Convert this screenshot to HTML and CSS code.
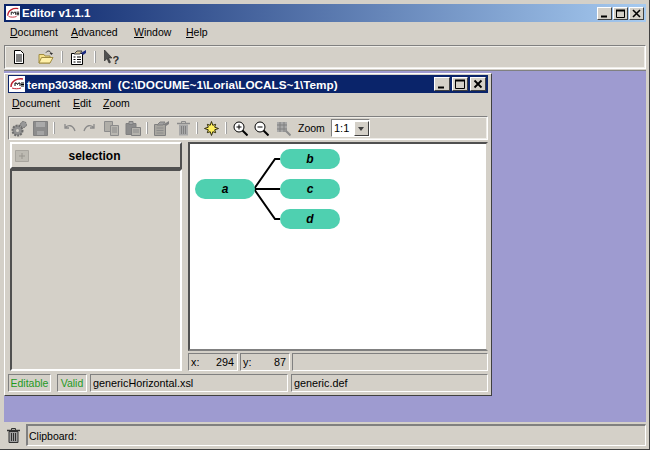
FILE: index.html
```html
<!DOCTYPE html>
<html lang="en">

<head>
    <meta charset="UTF-8">
    <title>Editor v1.1.1</title>
    <link rel="stylesheet" href="styles.css">
</head>

<body>
    <div class="app">
        <header class="titlebar main-title">
            <svg class="logo" width="14" height="14" viewBox="0 0 16 16">
                <rect width="16" height="16" fill="#fff" />
                <path d="M2 11C2 5 8 2 14 3" fill="none" stroke="#c02030" stroke-width="1.5" />
                <path d="M3 12C6 13 9 13 12 12" fill="none" stroke="#c02030" />
                <path d="M6 10V7h1.500l1 1.500 1-1.500H11v3M12 7h3M12 8.500h3M12 10h3" fill="none" stroke="#000" />
            </svg>
            <span class="title-text">Editor v1.1.1</span>
            <div class="win-buttons">
                <button class="win-btn" type="button"><svg width="9" height="9" viewBox="0 0 9 9"><path d="M1 7.500h6" stroke="#000" stroke-width="2" /></svg></button>
                <button class="win-btn" type="button"><svg width="11" height="9" viewBox="0 0 11 9"><path d="M1.500 1.500h8v7h-8z" fill="none" stroke="#000" /><path d="M1 1.500h9" stroke="#000" stroke-width="2" /></svg></button>
                <button class="win-btn" type="button"><svg width="9" height="9" viewBox="0 0 9 9"><path d="M1 1l7 7M8 1l-7 7" stroke="#000" stroke-width="1.600" /></svg></button>
            </div>
        </header>

        <nav class="menu main-menu">
            <span><u>D</u>ocument</span>
            <span><u>A</u>dvanced</span>
            <span><u>W</u>indow</span>
            <span><u>H</u>elp</span>
        </nav>

        <div class="toolbar main-tools">
            <span class="tool">
                <svg width="16" height="16" viewBox="0 0 16 16"><path d="M3.500 1.500h6l3 3v10h-9z" fill="#fff" stroke="#000" /><path d="M5 6h6M5 8h6M5 10h6M5 12h6" stroke="#000" /></svg>
            </span>
            <span class="tool">
                <svg width="16" height="16" viewBox="0 0 16 16"><path d="M1 5.500h5l1 1.500h5v7H1z" fill="#f5e08a" stroke="#a08c40" /><path d="M1 14l2.500-5.500H15L12 14z" fill="#fff0a8" stroke="#a08c40" /><path d="M8 3.500C9.500 1.500 12 1.500 13 4" fill="none" stroke="#303030" /><path d="M11.500 4H15l-1.500 2z" fill="#303030" /></svg>
            </span>
            <span class="tool-sep"></span>
            <span class="tool">
                <svg width="18" height="16" viewBox="0 0 18 16"><path d="M1.500 4.500h11v11h-11z" fill="#fff" stroke="#000" /><path d="M3.500 8h2M7 8h4M3.500 10.500h2M7 10.500h4M3.500 13h2M7 13h4" stroke="#000" /><path d="M4 5l3-3h5l-2 3z" fill="#d8c8a0" stroke="#404040" /><path d="M11 4l5-3v3l-3 2z" fill="#1a2a80" /></svg>
            </span>
            <span class="tool-sep"></span>
            <span class="tool">
                <svg width="17" height="16" viewBox="0 0 17 16"><path d="M1.500 1v11l2.500-2.500 2 4.500 1.500-.7-2-4.300H9z" fill="#505050" stroke="#202020" stroke-width=".6" /><text class="help-mark" x="9.500" y="15">?</text></svg>
            </span>
        </div>

        <div class="desktop">
            <section class="window">
                <header class="titlebar doc-title">
                    <svg class="logo" width="16" height="16" viewBox="0 0 16 16">
                        <rect width="16" height="16" fill="#fff" />
                        <path d="M2 11C2 5 8 2 14 3" fill="none" stroke="#c02030" stroke-width="1.5" />
                        <path d="M3 12C6 13 9 13 12 12" fill="none" stroke="#c02030" />
                        <path d="M6 10V7h1.500l1 1.500 1-1.500H11v3M12 7h3M12 8.500h3M12 10h3" fill="none" stroke="#000" />
                    </svg>
                    <span class="title-text">temp30388.xml&nbsp; (C:\DOCUME~1\Loria\LOCALS~1\Temp)</span>
                    <div class="win-buttons">
                        <button class="win-btn" type="button"><svg width="10" height="10" viewBox="0 0 10 10"><path d="M1 8.500h6" stroke="#000" stroke-width="2" /></svg></button>
                        <button class="win-btn" type="button"><svg width="12" height="10" viewBox="0 0 12 10"><path d="M1.500 1.500h9v8h-9z" fill="none" stroke="#000" /><path d="M1 1.500h10" stroke="#000" stroke-width="2" /></svg></button>
                        <button class="win-btn" type="button"><svg width="10" height="10" viewBox="0 0 10 10"><path d="M1.500 1.500l7 7M8.500 1.500l-7 7" stroke="#000" stroke-width="1.800" /></svg></button>
                    </div>
                </header>

                <nav class="menu doc-menu">
                    <span><u>D</u>ocument</span>
                    <span><u>E</u>dit</span>
                    <span><u>Z</u>oom</span>
                </nav>

                <div class="toolbar doc-tools">
                    <span class="tool small">
                        <svg width="17" height="17" viewBox="0 0 17 17"><circle cx="6.500" cy="10.500" r="5" fill="#909090" stroke="#6c6c6c" stroke-width="2" stroke-dasharray="2 1" /><circle cx="6.500" cy="10.500" r="1.500" fill="#d4d0c8" /><circle cx="12.500" cy="4.500" r="3" fill="#989898" stroke="#6c6c6c" stroke-dasharray="2 1" /></svg>
                    </span>
                    <span class="tool small">
                        <svg width="15" height="15" viewBox="0 0 15 15"><path d="M.500.500h14v14H.500z" fill="#8c8c8c" stroke="#808080" /><path d="M3 1h9v5H3z" fill="#aaa" /><path d="M4 10h7v4H4z" fill="#a4a4a4" /></svg>
                    </span>
                    <span class="tool-sep small"></span>
                    <span class="tool small">
                        <svg width="14" height="10" viewBox="0 0 14 10"><path d="M3 1v4h4M3 5c3-4 8-3 10 3" fill="none" stroke="#8a8a8a" stroke-width="1.300" /></svg>
                    </span>
                    <span class="tool small">
                        <svg width="14" height="10" viewBox="0 0 14 10"><path d="M11 1v4H7M11 5C8 1 3 2 1 8" fill="none" stroke="#8a8a8a" stroke-width="1.300" /></svg>
                    </span>
                    <span class="tool small">
                        <svg width="15" height="15" viewBox="0 0 15 15"><path d="M.500.500h8v10h-8z" fill="#b0aea8" stroke="#8c8c8c" /><path d="M6.500 4.500h8v10h-8z" fill="#b8b6b0" stroke="#8c8c8c" /><path d="M8 7h5M8 9h5M8 11h5" stroke="#8c8c8c" /></svg>
                    </span>
                    <span class="tool small">
                        <svg width="16" height="15" viewBox="0 0 16 15"><path d="M1 2.500h10v11H1z" fill="#8c8c8c" stroke="#808080" /><path d="M4 .500h4v3H4z" fill="#a4a4a4" stroke="#808080" /><path d="M6.500 6.500h9v8h-9z" fill="#b4b2ac" stroke="#808080" /><path d="M8 9h6M8 11h6" stroke="#8c8c8c" /></svg>
                    </span>
                    <span class="tool-sep small"></span>
                    <span class="tool small">
                        <svg width="17" height="16" viewBox="0 0 17 16"><path d="M1.500 4.500h11v11h-11z" fill="#a8a6a0" stroke="#808080" /><path d="M3.500 8h7M3.500 10.500h7M3.500 13h7" stroke="#8c8c8c" /><path d="M4 5l3-3h5l-2 3z" fill="#a0a0a0" stroke="#808080" /><path d="M11 4l5-3v3l-3 2z" fill="#808080" /></svg>
                    </span>
                    <span class="tool small">
                        <svg width="13" height="15" viewBox="0 0 13 15"><path d="M0 2.500h13" stroke="#8c8c8c" stroke-width="1.500" /><path d="M4.500 2V.500h4V2" fill="none" stroke="#8c8c8c" /><path d="M2 3.500h9v11H2z" fill="#a8a8a8" /><path d="M4.500 5v8M6.500 5v8M8.500 5v8" stroke="#808080" /></svg>
                    </span>
                    <span class="tool-sep small"></span>
                    <span class="tool small">
                        <svg width="15" height="15" viewBox="0 0 15 15"><path d="M7.500.500L8.800 4.300 11.700 3.300 10.700 6.200 14.500 7.500 10.700 8.800 11.700 11.700 8.800 10.700 7.500 14.500 6.200 10.700 3.300 11.700 4.300 8.800 .500 7.500 4.300 6.200 3.300 3.300 6.200 4.300z" fill="#fff060" stroke="#302c10" /></svg>
                    </span>
                    <span class="tool-sep small"></span>
                    <span class="tool small">
                        <svg width="15" height="15" viewBox="0 0 15 15"><circle cx="6" cy="6" r="5" fill="#fff" stroke="#000" /><path d="M9.500 9.500l5 5" stroke="#000" stroke-width="2" /><path d="M3.500 6h5M6 3.500v5" stroke="#000" /></svg>
                    </span>
                    <span class="tool small">
                        <svg width="15" height="15" viewBox="0 0 15 15"><circle cx="6" cy="6" r="5" fill="#fff" stroke="#000" /><path d="M9.500 9.500l5 5" stroke="#000" stroke-width="2" /><path d="M3.500 6h5" stroke="#000" /></svg>
                    </span>
                    <span class="tool small">
                        <svg width="15" height="15" viewBox="0 0 15 15"><path d="M1 1h10v10H1z" fill="#a8a8a8" /><path d="M9.500 9.500l5 5" stroke="#8c8c8c" stroke-width="2" /><path d="M1 4h10M1 8h10M4 1v10M8 1v10" stroke="#808080" /></svg>
                    </span>
                    <span class="zoom-label">Zoom</span>
                    <div class="zoom-select">
                        <span class="zoom-value">1:1</span>
                        <span class="zoom-arrow"></span>
                    </div>
                </div>

                <div class="workspace">
                    <aside class="side">
                        <div class="side-head">
                            <svg width="14" height="12" viewBox="0 0 14 12"><path d="M.500.500h13v11H.500z" fill="#bdbab2" stroke="#a8a59e" /><path d="M4 6h6M7 3v6" stroke="#98958e" /></svg>
                            <span class="side-title">selection</span>
                        </div>
                        <div class="side-list"></div>
                    </aside>

                    <div class="canvas-col">
                        <div class="canvas">
                            <svg class="tree" width="296" height="205" viewBox="0 0 296 205">
                                <path d="M64 45L85 15H90M64 45H90M64 45L85 75H90" fill="none" stroke="#000" stroke-width="2" />
                                <rect class="node" x="5" y="35" width="60" height="20" rx="10" />
                                <rect class="node" x="90" y="5" width="60" height="20" rx="10" />
                                <rect class="node" x="90" y="35" width="60" height="20" rx="10" />
                                <rect class="node" x="90" y="65" width="60" height="20" rx="10" />
                                <text class="node-text" x="35" y="49">a</text>
                                <text class="node-text" x="120" y="19">b</text>
                                <text class="node-text" x="120" y="49">c</text>
                                <text class="node-text" x="120" y="79">d</text>
                            </svg>
                        </div>
                        <div class="coords">
                            <div class="field coord"><span>x:</span><span>294</span></div>
                            <div class="field coord"><span>y:</span><span>87</span></div>
                            <div class="field grow"></div>
                        </div>
                    </div>
                </div>

                <div class="statusbar">
                    <div class="field ok editable">Editable</div>
                    <div class="field ok valid">Valid</div>
                    <div class="field xsl">genericHorizontal.xsl</div>
                    <div class="field grow">generic.def</div>
                </div>
            </section>
        </div>

        <footer class="clipboard">
            <svg width="13" height="15" viewBox="0 0 13 15"><path d="M0 2.500h13" stroke="#303030" stroke-width="1.500" /><path d="M4.500 2V.500h4V2" fill="none" stroke="#303030" /><path d="M2 3.500h9v11H2z" fill="#a0a0a0" stroke="#303030" /><path d="M4.500 5v8M6.500 5v8M8.500 5v8" stroke="#303030" /></svg>
            <div class="field grow">Clipboard:</div>
        </footer>
    </div>
</body>

</html>
```

FILE: styles.css
```css
:root {
    --face: #d4d0c8;
    --shadow: #808080;
    --dark: #404040;
    --desk: #9e9bd0;
    --navy: #0a246a;
    --node: #4fd0b0;
}

* {
    margin: 0;
    padding: 0;
    box-sizing: border-box;
    font-family: "Liberation Sans", Arial, sans-serif;
}

body {
    width: 650px;
    height: 450px;
    overflow: hidden;
    background-color: var(--face);
    font-size: 11px;
    color: #000;
}

.app {
    height: 450px;
    display: flex;
    flex-direction: column;
    padding: 4px 3px 3px 4px;
    border-right: 1px solid var(--dark);
    border-bottom: 1px solid var(--dark);
}

.titlebar {
    display: flex;
    align-items: center;
    color: white;
    font-weight: bold;
}

.main-title {
    height: 18px;
    background: linear-gradient(to right, var(--navy), #a6caf0);
    font-size: 11.5px;
    padding-left: 2px;
}

.doc-title {
    height: 18px;
    background-color: var(--navy);
    font-size: 11.75px;
    padding-left: 1px;
}

.logo {
    flex-shrink: 0;
    margin-right: 2px;
}

.win-buttons {
    display: flex;
    margin-left: auto;
    margin-right: 2px;
    gap: 1px;
}

.win-btn {
    display: flex;
    align-items: center;
    justify-content: center;
    width: 15px;
    height: 13px;
    background-color: var(--face);
    border: 1px solid;
    border-color: #fff var(--dark) var(--dark) #fff;
}

.doc-title .win-btn {
    width: 16px;
    height: 14px;
}

.doc-title .win-buttons {
    gap: 2px;
}

.menu {
    display: flex;
    align-items: center;
    font-size: 10.5px;
}

.main-menu {
    height: 21px;
    padding-left: 6px;
    padding-bottom: 2px;
}

.main-menu span:nth-child(1) { width: 61px; }
.main-menu span:nth-child(2) { width: 63px; }
.main-menu span:nth-child(3) { width: 52px; }

.doc-menu {
    height: 23px;
    padding-left: 4px;
    padding-bottom: 4px;
}

.doc-menu span:nth-child(1) { width: 61px; }
.doc-menu span:nth-child(2) { width: 30px; }

.toolbar {
    display: flex;
    align-items: center;
    height: 24px;
    border: 1px solid;
    border-color: var(--shadow) #fff #fff var(--shadow);
    outline: 1px solid #efede8;
    outline-offset: -2px;
}

.main-tools {
    margin-top: 2px;
}

.tool {
    display: flex;
    align-items: center;
    justify-content: center;
    width: 27px;
}

.tool.small {
    width: 21.5px;
}

.tool.small:first-child {
    width: 20.5px;
}

.tool-sep {
    width: 6px;
    height: 12px;
    flex-shrink: 0;
    background: linear-gradient(to right, transparent 2px, #fff 2px, #fff 3px, #a0a0a0 3px, #a0a0a0 4px, transparent 4px);
}

.tool-sep.small {
    width: 7px;
}

.help-mark {
    font-size: 11px;
    font-weight: bold;
    fill: #303030;
}

.desktop {
    flex: 1;
    margin-top: 1px;
    padding-top: 2px;
    background-color: var(--desk);
    border-top: 1px solid var(--shadow);
}

.window {
    width: 488px;
    height: 323px;
    display: flex;
    flex-direction: column;
    padding: 1px 3px 3px;
    background-color: var(--face);
    border: 1px solid;
    border-color: #fff var(--dark) var(--dark) #fff;
}

.doc-tools {
    margin-bottom: 2px;
}

.zoom-label {
    margin-left: 4px;
    font-size: 10.5px;
    width: 33px;
}

.zoom-select {
    display: flex;
    align-items: center;
    width: 39px;
    height: 18px;
    background-color: white;
    border: 1px solid;
    border-color: var(--shadow) #fff #fff var(--shadow);
    font-size: 11px;
    padding-left: 2px;
}

.zoom-value {
    flex: 1;
}

.zoom-arrow {
    position: relative;
    width: 15px;
    height: 15px;
    background-color: var(--face);
    border: 1px solid;
    border-color: #fff var(--dark) var(--dark) #fff;
}

.zoom-arrow::after {
    content: "";
    position: absolute;
    left: 3px;
    top: 5px;
    border-style: solid;
    border-width: 4px 3.500px 0;
    border-color: #404040 transparent transparent;
}

.workspace {
    flex: 1;
    display: flex;
    min-height: 0;
}

.side {
    width: 172px;
    margin-left: 2px;
    margin-right: 6px;
    display: flex;
    flex-direction: column;
}

.side-head {
    display: flex;
    align-items: center;
    height: 27px;
    padding-left: 3px;
    background-color: var(--face);
    border: 2px solid;
    border-color: #fff #505050 #505050 #fff;
}

.side-title {
    flex: 1;
    text-align: center;
    font-weight: bold;
    font-size: 12px;
    padding-right: 20px;
}

.side-list {
    flex: 1;
    border: 2px solid;
    border-color: #505050 #fff #fff #505050;
    background-color: var(--face);
}

.canvas-col {
    flex: 1;
    display: flex;
    flex-direction: column;
}

.canvas {
    height: 209px;
    background-color: white;
    border: 2px solid;
    border-color: #505050 var(--face) var(--shadow) #505050;
}

.tree {
    display: block;
}

.node {
    fill: var(--node);
}

.node-text {
    font-size: 12px;
    font-weight: bold;
    font-style: italic;
    text-anchor: middle;
}

.coords {
    display: flex;
    gap: 2px;
    margin-top: 2px;
}

.field {
    height: 18px;
    display: flex;
    align-items: center;
    padding-left: 2px;
    font-size: 10.8px;
    white-space: nowrap;
    border: 1px solid;
    border-color: var(--shadow) #fff #fff var(--shadow);
}

.coord {
    width: 50px;
    justify-content: space-between;
    padding-right: 3px;
}

.grow {
    flex: 1;
}

.statusbar {
    display: flex;
    margin-top: 3px;
    gap: 3px;
}

.ok {
    color: #1f9a1f;
    justify-content: center;
    padding-left: 0;
    font-size: 10.5px;
}

.editable {
    width: 43px;
    margin-right: 3px;
}

.valid {
    width: 30px;
}

.xsl {
    width: 198px;
}

.clipboard {
    display: flex;
    align-items: center;
    margin-top: 2px;
    padding-left: 3px;
    gap: 6px;
}

.clipboard .field {
    height: 22px;
    padding-left: 1px;
    font-size: 10.5px;
    border-width: 2px 1px 1px 2px;
}
```
